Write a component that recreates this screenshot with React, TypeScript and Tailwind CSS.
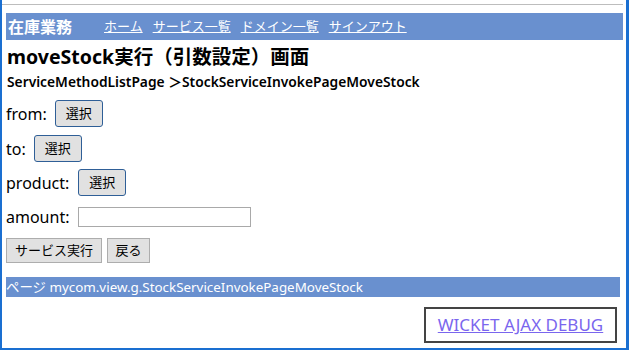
import React from "react";

const font = { fontFamily: '"Noto Sans", "Noto Sans CJK JP", sans-serif' };

function SelectButton() {
  return (
    <button className="h-[27px] w-[48px] rounded-[3px] border border-[#2f5f97] bg-[#e1e1e1] text-[13px] leading-none text-black">
      選択
    </button>
  );
}

export default function App() {
  return (
    <div
      className="w-[629px] h-[350px] overflow-hidden bg-white border-l-2 border-r-[3px] border-b-2 border-[#1a6fd1] pt-[4px]"
      style={font}
    >
      <div className="border-t border-[#bdbdbd] mr-[3px] h-full pl-[4px]">
        <div className="mt-[8px] h-[27px] bg-[#6990cf] flex items-center pl-[2px] text-white">
          <span className="text-[16px] font-bold">在庫業務</span>
          <span className="ml-[32px] flex gap-[10px] text-[13px]">
            <a className="underline">ホーム</a>
            <a className="underline">サービス一覧</a>
            <a className="underline">ドメイン一覧</a>
            <a className="underline">サインアウト</a>
          </span>
        </div>
        <div className="mt-[4px] h-[26px] leading-[26px] text-[19.5px] font-bold text-black pl-[1px]">
          moveStock実行（引数設定）画面
        </div>
        <div className="mt-[4px] h-[16px] leading-[16px] text-[13.8px] font-semibold text-black pl-[1px]">
          ServiceMethodListPage ＞StockServiceInvokePageMoveStock
        </div>
        <div className="mt-[10px] flex items-center gap-[8px] text-[16px] text-black">
          <span>from:</span>
          <SelectButton />
        </div>
        <div className="mt-[8px] flex items-center gap-[8px] text-[16px] text-black">
          <span>to:</span>
          <SelectButton />
        </div>
        <div className="mt-[7px] flex items-center gap-[9px] text-[16px] text-black">
          <span>product:</span>
          <SelectButton />
        </div>
        <div className="mt-[9px] flex items-center gap-[9px] text-[16px] text-black">
          <span>amount:</span>
          <input className="h-[20px] w-[173px] border border-[#a9a9a9] bg-white" />
        </div>
        <div className="mt-[9px] flex items-center gap-[5px]">
          <button className="h-[25px] w-[96px] border border-[#adadad] bg-[#e1e1e1] text-[13px] text-black leading-none">
            サービス実行
          </button>
          <button className="h-[25px] w-[43px] border border-[#adadad] bg-[#e1e1e1] text-[13px] text-black leading-none">
            戻る
          </button>
        </div>
        <div className="mt-[14px] mr-[3px] h-[20px] bg-[#6990cf] flex items-center text-white text-[13.4px]">
          ページ mycom.view.g.StockServiceInvokePageMoveStock
        </div>
        <div className="mt-[10px] flex justify-end pr-[6px]">
          <div className="h-[36px] w-[193px] border-2 border-[#444] flex items-center justify-center">
            <a className="underline text-[#7a66ee] text-[17px]">WICKET AJAX DEBUG</a>
          </div>
        </div>
      </div>
    </div>
  );
}
